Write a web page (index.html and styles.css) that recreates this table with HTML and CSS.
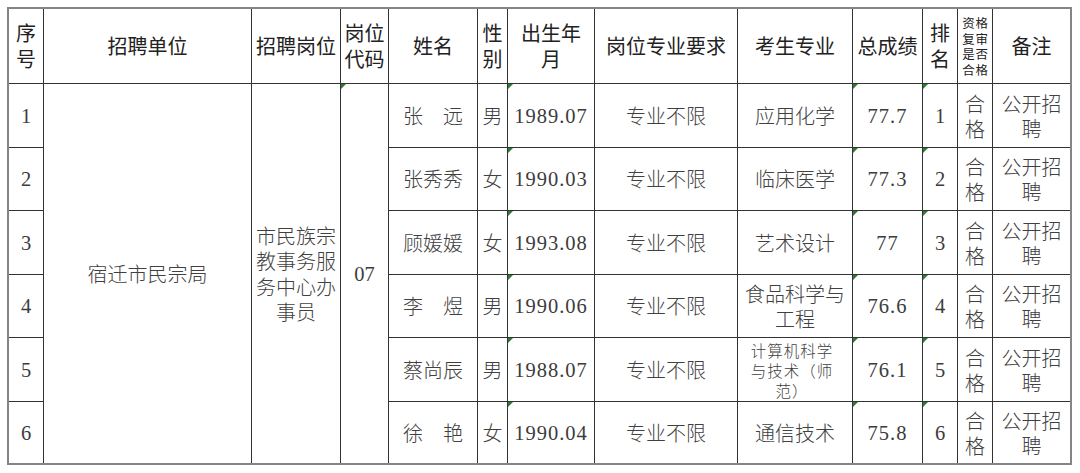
FILE: index.html
```html
<!DOCTYPE html>
<html lang="zh-CN">
<head>
<meta charset="utf-8">
<title>招聘结果</title>
<link rel="stylesheet" href="styles.css">
</head>
<body>
<div class="sheet">
  <div class="c h">序<br>号</div>
  <div class="c h">招聘单位</div>
  <div class="c h">招聘岗位</div>
  <div class="c h">岗位<br>代码</div>
  <div class="c h">姓名</div>
  <div class="c h">性<br>别</div>
  <div class="c h">出生年<br>月</div>
  <div class="c h">岗位专业要求</div>
  <div class="c h">考生专业</div>
  <div class="c h">总成绩</div>
  <div class="c h">排<br>名</div>
  <div class="c h small">资格<br>复审<br>是否<br>合格</div>
  <div class="c h">备注</div>

  <div class="c d num">1</div>
  <div class="c d unit">宿迁市民宗局</div>
  <div class="c d post">市民族宗<br>教事务服<br>务中心办<br>事员</div>
  <div class="c d num code tri">07</div>
  <div class="c d">张　远</div>
  <div class="c d">男</div>
  <div class="c d num date tri">1989.07</div>
  <div class="c d">专业不限</div>
  <div class="c d">应用化学</div>
  <div class="c d num date tri">77.7</div>
  <div class="c d num tri">1</div>
  <div class="c d ml">合<br>格</div>
  <div class="c d ml">公开招<br>聘</div>

  <div class="c d num">2</div>
  <div class="c d">张秀秀</div>
  <div class="c d">女</div>
  <div class="c d num date tri">1990.03</div>
  <div class="c d">专业不限</div>
  <div class="c d">临床医学</div>
  <div class="c d num date tri">77.3</div>
  <div class="c d num tri">2</div>
  <div class="c d ml">合<br>格</div>
  <div class="c d ml">公开招<br>聘</div>

  <div class="c d num">3</div>
  <div class="c d">顾媛媛</div>
  <div class="c d">女</div>
  <div class="c d num date tri">1993.08</div>
  <div class="c d">专业不限</div>
  <div class="c d">艺术设计</div>
  <div class="c d num date tri">77</div>
  <div class="c d num tri">3</div>
  <div class="c d ml">合<br>格</div>
  <div class="c d ml">公开招<br>聘</div>

  <div class="c d num">4</div>
  <div class="c d">李　煜</div>
  <div class="c d">男</div>
  <div class="c d num date tri">1990.06</div>
  <div class="c d">专业不限</div>
  <div class="c d ml">食品科学与<br>工程</div>
  <div class="c d num date tri">76.6</div>
  <div class="c d num tri">4</div>
  <div class="c d ml">合<br>格</div>
  <div class="c d ml">公开招<br>聘</div>

  <div class="c d num">5</div>
  <div class="c d">蔡尚辰</div>
  <div class="c d">男</div>
  <div class="c d num date tri">1988.07</div>
  <div class="c d">专业不限</div>
  <div class="c d tiny">计算机科学<br>与技术（师<br>范）</div>
  <div class="c d num date tri">76.1</div>
  <div class="c d num tri">5</div>
  <div class="c d ml">合<br>格</div>
  <div class="c d ml">公开招<br>聘</div>

  <div class="c d num">6</div>
  <div class="c d">徐　艳</div>
  <div class="c d">女</div>
  <div class="c d num date tri">1990.04</div>
  <div class="c d">专业不限</div>
  <div class="c d">通信技术</div>
  <div class="c d num date tri">75.8</div>
  <div class="c d num tri">6</div>
  <div class="c d ml">合<br>格</div>
  <div class="c d ml">公开招<br>聘</div>
</div>
</body>
</html>
```
FILE: styles.css
```css
html, body {
  margin: 0;
  padding: 0;
  background: #ffffff;
}

body {
  padding: 7px 0 0 7px;
}

.sheet {
  display: inline-grid;
  grid-template-columns: 34px 207px 88px 47px 88px 29px 86px 142px 114px 69px 34px 34px 77px;
  grid-template-rows: 74px 63px 62px 63px 62px 63px 61px;
  gap: 1px;
  background: #333333;
  border: 2px solid #858585;
}

.c {
  position: relative;
  background: #ffffff;
  display: flex;
  align-items: center;
  justify-content: center;
  text-align: center;
  overflow: hidden;
}

.h {
  font-family: "Noto Sans CJK SC", "Noto Sans", sans-serif;
  font-size: 20px;
  line-height: 26px;
  color: #222222;
}

.h.small {
  font-size: 12.5px;
  line-height: 15.5px;
  letter-spacing: 0.8px;
  padding-left: 1px;
}

.d {
  font-family: "Noto Sans CJK SC", "Noto Sans", sans-serif;
  font-weight: 300;
  font-size: 20px;
  line-height: 26px;
  color: #404040;
}

.num {
  font-family: "Liberation Serif", "Noto Sans CJK SC", serif;
  font-weight: 400;
  font-size: 20.5px;
  color: #3c3c3c;
}

.date {
  letter-spacing: 1px;
}

.unit {
  grid-column: 2;
  grid-row: 2 / span 6;
}

.post {
  grid-column: 3;
  grid-row: 2 / span 6;
  line-height: 25.5px;
}

.code {
  grid-column: 4;
  grid-row: 2 / span 6;
}

.ml {
  line-height: 25px;
}

.tiny {
  font-size: 15.5px;
  line-height: 20px;
  letter-spacing: 1px;
  padding-right: 6px;
}

.tri::before {
  content: "";
  position: absolute;
  top: 0;
  left: 0;
  border-top: 5px solid #2f7a2f;
  border-right: 5px solid transparent;
}
```
